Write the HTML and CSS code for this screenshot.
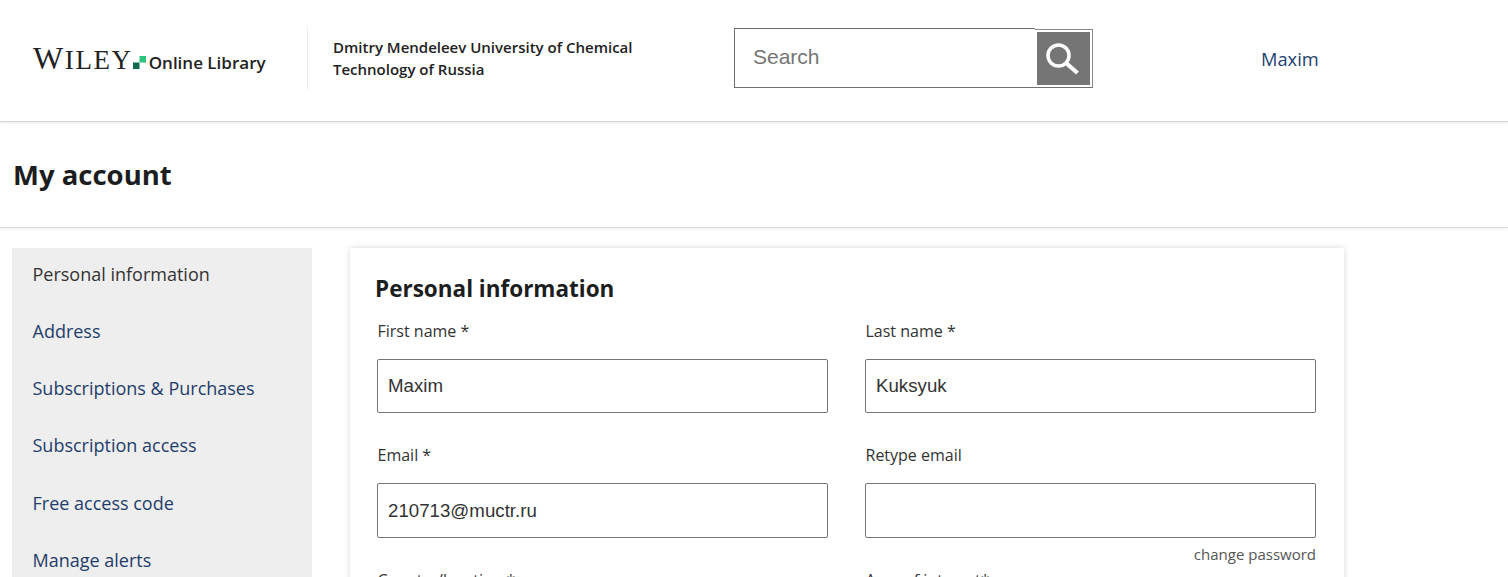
FILE: index.html
```html
<!DOCTYPE html>
<html lang="en">
<head>
  <meta charset="UTF-8">
  <meta name="viewport" content="width=device-width, initial-scale=1.0">
  <title>My account</title>
  <link rel="stylesheet" href="styles.css">
</head>
<body>
  <header class="site-header">
    <div class="logo">
      <span class="logo-wiley">W<span class="logo-small">ILEY</span></span>
      <svg class="logo-mark" width="14" height="14" viewBox="0 0 14 14">
        <rect x="0" y="7" width="7" height="7" fill="#0f6b4a"/>
        <rect x="7" y="0" width="7" height="7" fill="#2bc47d"/>
      </svg>
      <span class="logo-text">Online Library</span>
    </div>
    <div class="institution">Dmitry Mendeleev University of Chemical<br>Technology of Russia</div>
    <form class="search">
      <input class="search-input" type="text" placeholder="Search">
      <div class="search-action">
        <button class="search-button" type="button" aria-label="Search">
          <svg width="38" height="38" viewBox="0 0 38 38" fill="none" stroke="#fff">
            <circle cx="13.5" cy="15.5" r="10.5" stroke-width="3.5"/>
            <path d="M21 23L32.5 33" stroke-width="4.2"/>
          </svg>
        </button>
      </div>
    </form>
    <a class="user-link" href="#">Maxim</a>
  </header>

  <div class="page-title">
    <h1>My account</h1>
  </div>

  <main class="account">
    <nav class="side-menu">
      <a class="side-item active" href="#">Personal information</a>
      <a class="side-item" href="#">Address</a>
      <a class="side-item" href="#">Subscriptions &amp; Purchases</a>
      <a class="side-item" href="#">Subscription access</a>
      <a class="side-item" href="#">Free access code</a>
      <a class="side-item" href="#">Manage alerts</a>
    </nav>

    <section class="card">
      <h2>Personal information</h2>
      <div class="form-grid">
        <div class="field">
          <label>First name *</label>
          <input class="text-input" type="text" value="Maxim">
        </div>
        <div class="field">
          <label>Last name *</label>
          <input class="text-input" type="text" value="Kuksyuk">
        </div>
        <div class="field tall-row">
          <label>Email *</label>
          <input class="text-input tall" type="text" value="210713@muctr.ru">
        </div>
        <div class="field tall-row">
          <label>Retype email</label>
          <input class="text-input tall" type="text">
          <a class="change-password" href="#">change password</a>
        </div>
        <div class="field">
          <label>Country/location *</label>
        </div>
        <div class="field">
          <label>Area of interest*</label>
        </div>
      </div>
    </section>
  </main>
</body>
</html>
```
FILE: styles.css
```css
html, body {
  height: 100%;
}

body {
  margin: 0;
  height: 577px;
  overflow: hidden;
  background-color: white;
  color: #1c1d1e;
  font-family: "Open Sans", "Noto Sans", sans-serif;
}

a {
  text-decoration: none;
}

/* Header */
.site-header {
  display: flex;
  align-items: center;
  height: 116px;
  padding-bottom: 5px;
  border-bottom: 1px solid #d6d6d6;
  box-shadow: 0 1px 2px rgba(0, 0, 0, 0.08);
}

.logo {
  display: flex;
  align-items: baseline;
  width: 275px;
  margin-left: 33px;
  height: 63px;
  padding-top: 17px;
  box-sizing: border-box;
  border-right: 1px solid #ececec;
}

.logo-wiley {
  font-family: "Liberation Serif", serif;
  font-size: 32px;
  line-height: 28px;
  color: #222;
  letter-spacing: 1.6px;
}

.logo-small {
  font-size: 27px;
}

.logo-mark {
  margin-left: 0;
  width: 13px;
  height: 13px;
}

.logo-text {
  margin-left: 3px;
  font-size: 17px;
  font-weight: 600;
  color: #222;
}

.institution {
  width: 401px;
  margin-left: 25px;
  font-size: 15px;
  font-weight: 600;
  line-height: 22px;
  color: #222;
}

.search {
  display: flex;
  width: 359px;
  height: 60px;
}

.search-input {
  flex: 1;
  min-width: 0;
  box-sizing: border-box;
  border: 1px solid #6f6f6f;
  border-right: none;
  outline: none;
  padding: 0 0 2px 18px;
  font-family: "Liberation Sans", sans-serif;
  font-size: 21px;
  color: #333;
}

.search-input::placeholder {
  color: #757575;
  opacity: 1;
}

.search-action {
  display: flex;
  width: 58px;
  margin-top: 1px;
  padding: 2px;
  box-sizing: border-box;
  border: 1px solid #8a8a8a;
  border-left: none;
  border-bottom-color: #6f6f6f;
}

.search-button {
  display: flex;
  align-items: center;
  justify-content: center;
  width: 54px;
  padding: 0;
  border: none;
  background-color: #757575;
}

.user-link {
  margin-left: 168px;
  font-size: 18.3px;
  font-weight: 500;
  color: #1d3f6e;
}

/* Title */
.page-title {
  height: 105px;
  display: flex;
  align-items: center;
  padding-left: 13px;
  border-bottom: 1px solid #dcdcdc;
  box-shadow: 0 1px 3px rgba(0, 0, 0, 0.08);
}

.page-title h1 {
  margin: 0;
  font-size: 27.5px;
  font-weight: 700;
  color: #1c1d1e;
}

/* Content */
.account {
  display: flex;
  align-items: flex-start;
  gap: 38px;
  margin: 20px 0 0 12px;
}

.side-menu {
  display: flex;
  flex-direction: column;
  width: 300px;
  height: 400px;
  padding-top: 11.8px;
  box-sizing: border-box;
  background-color: #eeeeee;
}

.side-item {
  height: 57.2px;
  padding-left: 20.5px;
  font-size: 18px;
  line-height: 28px;
  color: #1f3d6b;
  flex-shrink: 0;
}

.side-item.active {
  color: #333;
}

.card {
  width: 994px;
  height: 400px;
  padding: 24px 28px 0 25px;
  box-sizing: border-box;
  border-radius: 2px;
  box-shadow: 0 0 6px rgba(0, 0, 0, 0.16);
}

.card h2 {
  margin: 0 0 19px 0;
  font-size: 22.5px;
  line-height: 34px;
  font-weight: 700;
  color: #1c1d1e;
}

.form-grid {
  display: grid;
  grid-template-columns: 451px 451px;
  column-gap: 37px;
  padding-left: 2px;
}

.field {
  height: 124px;
}

.field.tall-row {
  height: 125px;
}

.field label {
  display: block;
  margin-top: -6px;
  margin-bottom: 16px;
  padding-left: 0.5px;
  font-size: 16px;
  line-height: 24px;
  color: #333;
}

.text-input {
  display: block;
  width: 100%;
  height: 54px;
  box-sizing: border-box;
  border: 1px solid #757575;
  border-radius: 2px;
  padding: 0 10px;
  font-family: "Liberation Sans", sans-serif;
  font-size: 18.7px;
  color: #333;
  outline: none;
}

.text-input.tall {
  height: 55px;
}

.change-password {
  display: block;
  margin-top: 4px;
  text-align: right;
  font-size: 15px;
  line-height: 24px;
  color: #555;
}
```
